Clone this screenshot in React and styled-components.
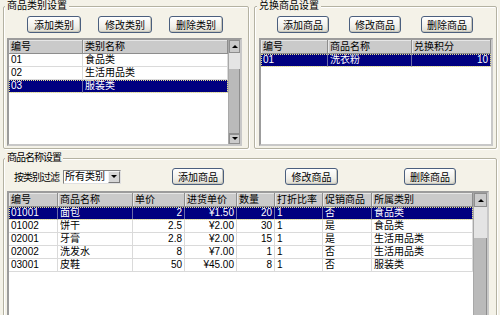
import styled, { createGlobalStyle } from "styled-components";

const GlobalStyle = createGlobalStyle`
  html, body {
    margin: 0;
    overflow: hidden;
    background: #f4f2e8;
    font-family: "Liberation Sans", "Noto Sans CJK SC", sans-serif;
    font-size: 10px;
    color: #000;
  }
`;

const Window = styled.div`
  width: 500px;
  height: 315px;
  box-sizing: border-box;
  padding: 0 3px;
  display: flex;
  flex-direction: column;
  gap: 3px;
`;

const TopRow = styled.div`
  display: flex;
  gap: 5px;
`;

const GroupBox = styled.fieldset`
  margin: 0;
  width: ${(p) => p.$w}px;
  box-sizing: border-box;
  padding: 4px ${(p) => p.$pr}px 2px ${(p) => p.$pl}px;
  border: 1px solid #b4b2a2;
  border-radius: 2px;
  box-shadow: 1px 1px 0 #fff, inset 1px 1px 0 #fff;
  min-width: 0;
  display: flex;
  flex-direction: column;
  height: ${(p) => p.$h}px;
`;

const Legend = styled.legend`
  font-size: 10px;
  line-height: 12px;
  padding: 0 2px;
  margin-left: -2px;
  letter-spacing: ${(p) => p.$ls || 0}px;
  background: #f4f2e8;
`;

const ButtonRow = styled.div`
  display: flex;
  gap: ${(p) => p.$gap}px;
  padding-left: ${(p) => p.$pl}px;
  margin-bottom: 5px;
`;

const Button = styled.button`
  width: ${(p) => p.$w}px;
  height: 17px;
  margin-left: ${(p) => p.$ml || 0}px;
  padding: 0;
  font-family: inherit;
  font-size: 10px;
  color: #000;
  border: 1px solid #4b5f7e;
  border-radius: 3px;
  background: linear-gradient(#ffffff, #f1f0ea 60%, #dedcd2);
  box-shadow: inset -1px -1px 0 #c9c7ba;
  flex-shrink: 0;
`;

const Frame = styled.div`
  display: flex;
  height: ${(p) => p.$h}px;
  box-sizing: border-box;
  border: 2px solid;
  border-color: #9c9c9c #c8c8c8 #c8c8c8 #9c9c9c;
  background: #fff;
  overflow: hidden;
`;

const Body = styled.div`
  flex: 1;
  min-width: 0;
`;

const HeaderRow = styled.div`
  display: flex;
  height: 14px;
  background: #cacaca;
`;

const HeaderCell = styled.div`
  box-sizing: border-box;
  width: ${(p) => (p.$w ? `${p.$w}px` : "auto")};
  flex: ${(p) => (p.$w ? "none" : 1)};
  padding-left: 2px;
  line-height: 13px;
  white-space: nowrap;
  border-right: 1px solid #8d8d8d;
  border-bottom: 1px solid #8d8d8d;
  box-shadow: inset 1px 1px 0 #e6e6e6;
`;

const Row = styled.div`
  display: flex;
  height: 13px;
  background: ${(p) => (p.$sel ? "#000080" : "#fff")};
  color: ${(p) => (p.$sel ? "#fff" : "#000")};
  outline: ${(p) => (p.$sel ? "1px dotted #e6e08a" : "none")};
  outline-offset: -1px;
`;

const Cell = styled.div`
  box-sizing: border-box;
  width: ${(p) => (p.$w ? `${p.$w}px` : "auto")};
  flex: ${(p) => (p.$w ? "none" : 1)};
  padding: 0 2px;
  line-height: 12px;
  white-space: nowrap;
  text-align: ${(p) => p.$align || "left"};
  border-right: 1px solid ${(p) => (p.$sel ? "#6a6aa8" : "#dadada")};
  border-bottom: 1px solid #dadada;
`;

const ScrollBar = styled.div`
  width: ${(p) => p.$w}px;
  display: flex;
  flex-direction: column;
  background: #e6e6e6;
  border-left: 1px solid #a8a8a8;
  box-sizing: border-box;
`;

const ScrollArrow = styled.div`
  height: ${(p) => p.$h}px;
  box-sizing: border-box;
  background: #cbcbcb;
  border: 1px solid #8e8e8e;
  display: flex;
  align-items: center;
  justify-content: center;
`;

const Arrow = styled.span`
  width: 0;
  height: 0;
  border-left: 3px solid transparent;
  border-right: 3px solid transparent;
  ${(p) =>
    p.$down ? "border-top: 3px solid #000;" : "border-bottom: 3px solid #000;"}
`;

const Track = styled.div`
  height: ${(p) => p.$h}px;
  flex: ${(p) => (p.$h ? "none" : 1)};
  background: ${(p) => (p.$thumb ? "#bababa" : "#e4e4e4")};
  border-right: ${(p) => (p.$thumb ? "1px solid #8e8e8e" : "none")};
  border-bottom: ${(p) => (p.$thumb ? "1px solid #8e8e8e" : "none")};
`;

const FilterRow = styled.div`
  display: flex;
  align-items: center;
  height: 17px;
  margin-bottom: 6px;
`;

const FilterLabel = styled.span`
  margin-left: 7px;
  letter-spacing: -1px;
  white-space: nowrap;
`;

const Combo = styled.div`
  margin-left: 4px;
  width: 58px;
  height: 14px;
  box-sizing: border-box;
  display: flex;
  background: #fff;
  border: 1px solid;
  border-color: #7f7f7f #e0e0e0 #e0e0e0 #7f7f7f;
`;

const ComboText = styled.span`
  flex: 1;
  padding-left: 1px;
  line-height: 12px;
  white-space: nowrap;
`;

const ComboButton = styled.div`
  width: 12px;
  box-sizing: border-box;
  background: #d6d6d6;
  border: 1px solid;
  border-color: #f4f4f4 #7a7a7a #7a7a7a #f4f4f4;
  display: flex;
  align-items: center;
  justify-content: center;
`;

const DataGrid = ({ height, columns, rows, scroll }) => (
  <Frame $h={height}>
    <Body>
      <HeaderRow>
        {columns.map((c) => (
          <HeaderCell key={c.title} $w={c.w}>
            {c.title}
          </HeaderCell>
        ))}
      </HeaderRow>
      {rows.map((r, i) => (
        <Row key={i} $sel={r.sel}>
          {columns.map((c, j) => (
            <Cell key={j} $w={c.w} $align={c.align} $sel={r.sel}>
              {r.cells[j]}
            </Cell>
          ))}
        </Row>
      ))}
    </Body>
    {scroll && (
      <ScrollBar $w={scroll.w}>
        <ScrollArrow $h={14}>
          <Arrow />
        </ScrollArrow>
        <Track $h={scroll.track} />
        <Track $h={scroll.thumb} $thumb />
        {scroll.down && (
          <ScrollArrow $h={11}>
            <Arrow $down />
          </ScrollArrow>
        )}
        {!scroll.down && <Track />}
      </ScrollBar>
    )}
  </Frame>
);

const catColumns = [{ title: "编号", w: 74 }, { title: "类别名称" }];
const catRows = [
  { cells: ["01", "食品类"] },
  { cells: ["02", "生活用品类"] },
  { cells: ["03", "服装类"], sel: true },
];

const giftColumns = [
  { title: "编号", w: 67 },
  { title: "商品名称", w: 84 },
  { title: "兑换积分", align: "right" },
];
const giftRows = [{ cells: ["01", "洗衣粉", "10"], sel: true }];

const goodsColumns = [
  { title: "编号", w: 49 },
  { title: "商品名称", w: 75 },
  { title: "单价", w: 52, align: "right" },
  { title: "进货单价", w: 52, align: "right" },
  { title: "数量", w: 38, align: "right" },
  { title: "打折比率", w: 48 },
  { title: "促销商品", w: 49 },
  { title: "所属类别" },
];
const goodsRows = [
  { cells: ["01001", "面包", "2", "¥1.50", "20", "1", "否", "食品类"], sel: true },
  { cells: ["01002", "饼干", "2.5", "¥2.00", "30", "1", "是", "食品类"] },
  { cells: ["02001", "牙膏", "2.8", "¥2.00", "15", "1", "是", "生活用品类"] },
  { cells: ["02002", "洗发水", "8", "¥7.00", "1", "1", "否", "生活用品类"] },
  { cells: ["03001", "皮鞋", "50", "¥45.00", "8", "1", "否", "服装类"] },
];

export default function App() {
  return (
    <>
      <GlobalStyle />
      <Window>
        <TopRow>
          <GroupBox $w={246} $h={149} $pl={3} $pr={6}>
            <Legend>商品类别设置</Legend>
            <ButtonRow $pl={20} $gap={17}>
              <Button $w={54}>添加类别</Button>
              <Button $w={54}>修改类别</Button>
              <Button $w={54}>删除类别</Button>
            </ButtonRow>
            <DataGrid
              height={108}
              columns={catColumns}
              rows={catRows}
              scroll={{ w: 12, track: 16, thumb: 64, down: true }}
            />
          </GroupBox>
          <GroupBox $w={243} $h={149} $pl={4} $pr={3}>
            <Legend>兑换商品设置</Legend>
            <ButtonRow $pl={18} $gap={20}>
              <Button $w={52}>添加商品</Button>
              <Button $w={52}>修改商品</Button>
              <Button $w={52}>删除商品</Button>
            </ButtonRow>
            <DataGrid height={108} columns={giftColumns} rows={giftRows} />
          </GroupBox>
        </TopRow>
        <GroupBox $w={494} $h={200} $pl={3} $pr={7}>
          <Legend $ls={-1}>商品名称设置</Legend>
          <FilterRow>
            <FilterLabel>按类别过滤</FilterLabel>
            <Combo>
              <ComboText>所有类别</ComboText>
              <ComboButton>
                <Arrow $down />
              </ComboButton>
            </Combo>
            <Button $w={52} $ml={51}>
              添加商品
            </Button>
            <Button $w={53} $ml={61}>
              修改商品
            </Button>
            <Button $w={52} $ml={66}>
              删除商品
            </Button>
          </FilterRow>
          <DataGrid
            height={160}
            columns={goodsColumns}
            rows={goodsRows}
            scroll={{ w: 14, track: 0, thumb: 79, down: false }}
          />
        </GroupBox>
      </Window>
    </>
  );
}
